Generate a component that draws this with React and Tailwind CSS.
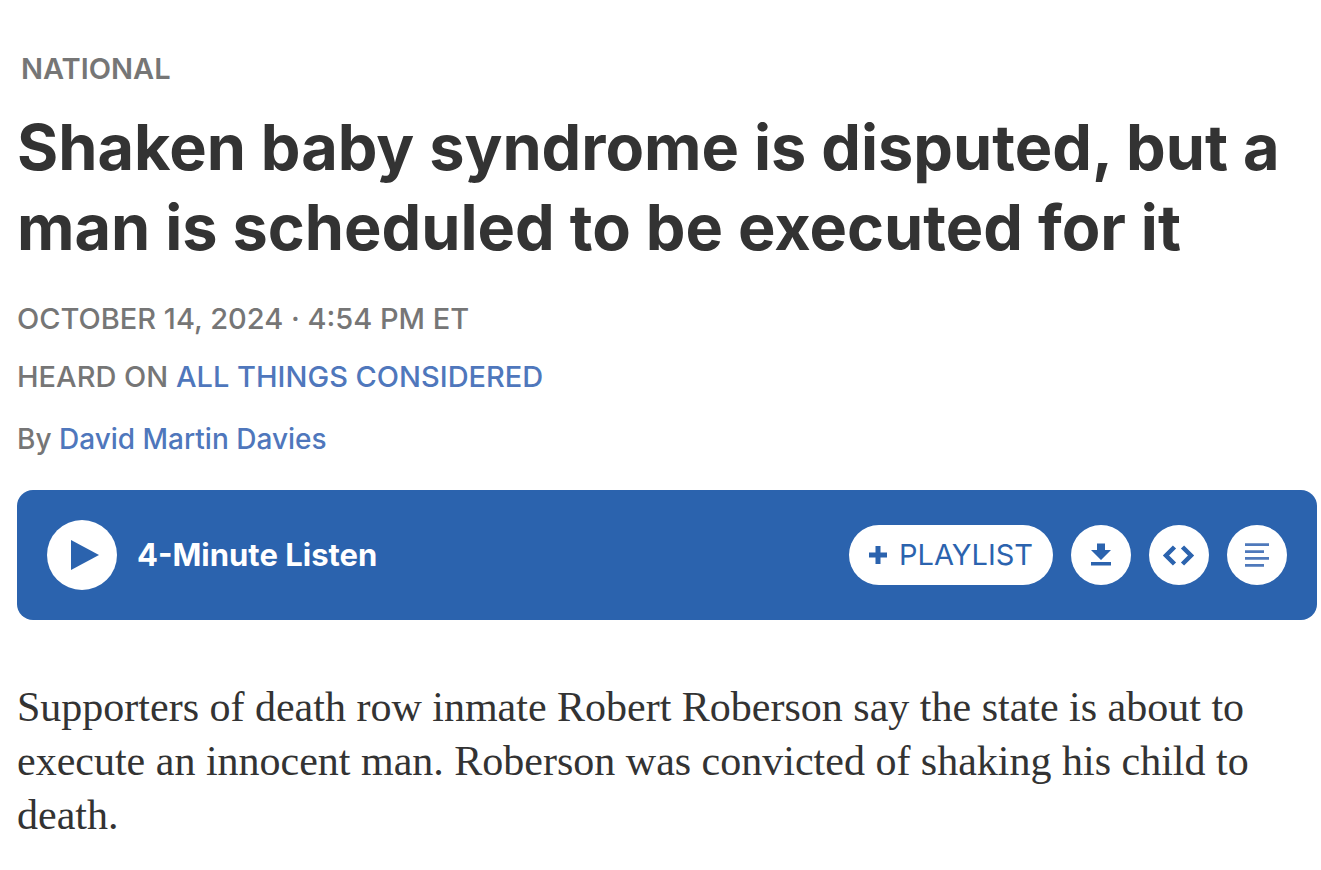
import React from 'react';

const IconButton = ({ label, children }) => (
  <button
    type="button"
    aria-label={label}
    className="flex h-[60px] w-[60px] shrink-0 items-center justify-center rounded-full bg-white text-[#2b63ae]"
  >
    {children}
  </button>
);

const AudioPlayer = () => (
  <section className="mt-[33px] flex items-center justify-between rounded-2xl bg-[#2b63ae] px-[30px] py-[30px]">
    <div className="flex items-center gap-5">
      <button
        type="button"
        aria-label="Play"
        className="flex h-[70px] w-[70px] shrink-0 items-center justify-center rounded-full bg-white text-[#2b63ae]"
      >
        <svg className="h-[70px] w-[70px]" viewBox="0 0 70 70" fill="currentColor">
          <path d="M24 20v30l28-15z" />
        </svg>
      </button>
      <span className="text-[31px] leading-10 font-bold text-white">4-Minute Listen</span>
    </div>

    {/* Player tools */}
    <div className="flex items-center gap-[18px]">
      <button
        type="button"
        className="flex h-[60px] items-center gap-3 rounded-full bg-white px-5 text-[29px] leading-9 text-[#2b63ae]"
      >
        <svg className="h-[18px] w-[18px]" viewBox="0 0 18 18" fill="currentColor">
          <path d="M6.5 0h5v6.5H18v5h-6.5V18h-5v-6.5H0v-5h6.5z" />
        </svg>
        <span>PLAYLIST</span>
      </button>
      <IconButton label="Download">
        <svg className="h-[60px] w-[60px]" viewBox="0 0 60 60" fill="currentColor">
          <path d="M26 18.500h8V25h6L30 35l-10-10h6zM20 37h20v3.500H20z" />
        </svg>
      </IconButton>
      <IconButton label="Embed">
        <svg className="h-[60px] w-[60px]" viewBox="0 0 60 60" fill="none" stroke="currentColor" strokeWidth="4.500">
          <path d="M25.500 22l-8.500 8.500 8.500 8.500M33.500 22l8.500 8.500-8.500 8.500" />
        </svg>
      </IconButton>
      <IconButton label="Transcript">
        <svg className="h-[60px] w-[60px] text-[#4f79bb]" viewBox="0 0 60 60" fill="currentColor">
          <path d="M18 18.300h24v2.700H18zM18 25.200h19v2.700H18zM18 32.100h24v2.700H18zM18 39h19v2.700H18z" />
        </svg>
      </IconButton>
    </div>
  </section>
);

const App = () => {
  return (
    <main className="bg-white pt-[51px] pr-1 pb-7 pl-[17px] font-['Inter',sans-serif] text-[#333333]">
      <p className="pl-1 text-[29px] leading-9 font-semibold text-[#767676]">NATIONAL</p>

      <h1 className="mt-5 text-[63px] leading-[80px] font-bold">
        Shaken baby syndrome is disputed, but a man is scheduled to be executed for it
      </h1>

      <div className="mt-[34px] text-[29px] leading-9 font-medium text-[#767676]">
        <p>
          <time dateTime="2024-10-14T16:54">OCTOBER 14, 2024 · 4:54 PM ET</time>
        </p>
        <p className="mt-[22px]">
          HEARD ON <a href="#program" className="text-[#4f77bc]">ALL THINGS CONSIDERED</a>
        </p>
        <p className="mt-[26px] text-[28px]">
          By <a href="#author" className="text-[#4f77bc]">David Martin Davies</a>
        </p>
      </div>

      <AudioPlayer />

      <p className="mt-[60px] font-['Liberation_Serif',serif] text-[42px] leading-[54px]">
        Supporters of death row inmate Robert Roberson say the state is about to execute an innocent man.
        Roberson was convicted of shaking his child to death.
      </p>
    </main>
  );
};

export default App;
